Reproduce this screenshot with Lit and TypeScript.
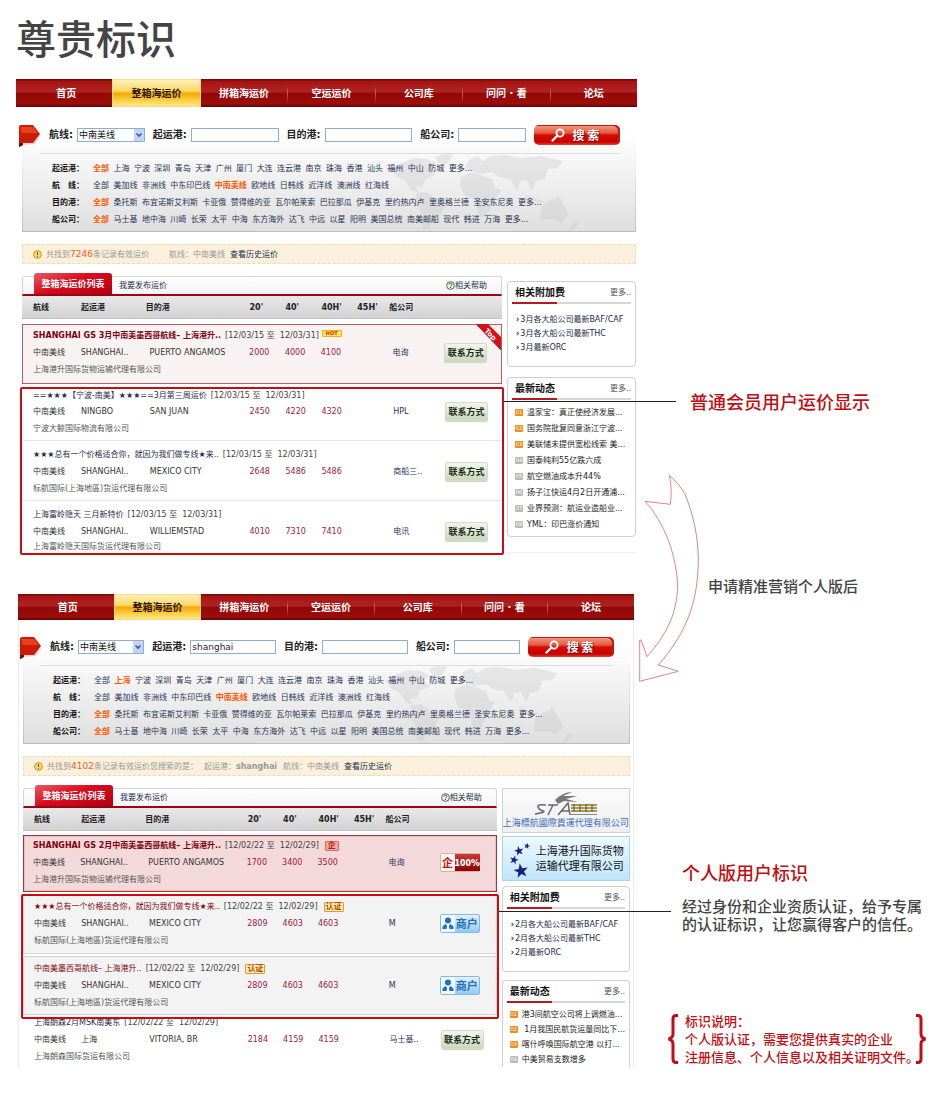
import { LitElement, html, css, svg, nothing } from "lit";
import { customElement, property } from "lit/decorators.js";
import { classMap } from "lit/directives/class-map.js";

type Offer = {
  title: string;
  dates: string;
  badge?: "hot" | "cert" | "firm";
  tone?: "bold" | "red";
  port: string;
  dest: string;
  prices: string[];
  carrier: string;
  company: string;
  action: "contact" | "full" | "merchant";
};

type Group = { kind: "featured" | "marked" | "plain"; offers: Offer[] };

type FilterRow = { label: string; active: string; items: string[] };

type PanelData = {
  id: string;
  compact: boolean;
  query: string;
  filters: FilterRow[];
  count: string;
  after: string;
  origin: string;
  groups: Group[];
  cards: boolean;
  fees: string[];
  news: string[];
};

const words = (s: string) => s.split(" ");

const PORTS = words("全部 上海 宁波 深圳 青岛 天津 广州 厦门 大连 连云港 南京 珠海 香港 汕头 福州 中山 防城 更多...");
const LINES = words("全部 美加线 非洲线 中东印巴线 中南美线 欧地线 日韩线 近洋线 澳洲线 红海线");
const DESTS = words("全部 桑托斯 布宜诺斯艾利斯 卡亚俄 赞得维的亚 瓦尔帕莱索 巴拉那瓜 伊基克 里约热内卢 里奥格兰德 圣安东尼奥 更多...");
const CARRIERS = words("全部 马士基 地中海 川崎 长荣 太平 中海 东方海外 达飞 中远 以星 阳明 美国总统 南美邮船 现代 韩进 万海 更多...");

const filters = (port: string): FilterRow[] => [
  { label: "起运港：", active: port, items: PORTS },
  { label: "航　线：", active: "中南美线", items: LINES },
  { label: "目的港：", active: "全部", items: DESTS },
  { label: "船公司：", active: "全部", items: CARRIERS },
];

const MARCH = "[12/03/15 至  12/03/31]";
const FEB = "[12/02/22 至  12/02/29]";

const BEFORE: PanelData = {
  id: "before",
  compact: false,
  query: "",
  filters: filters("全部"),
  count: "7246",
  after: "条记录有效运价",
  origin: "",
  groups: [
    {
      kind: "featured",
      offers: [
        { title: "SHANGHAI GS 3月中南美墨西哥航线– 上海港升..", dates: MARCH, badge: "hot", tone: "bold", port: "SHANGHAI..", dest: "PUERTO ANGAMOS", prices: ["2000", "4000", "4100", ""], carrier: "电询", company: "上海港升国际货物运输代理有限公司", action: "contact" },
      ],
    },
    {
      kind: "marked",
      offers: [
        { title: "==★★★【宁波-南美】★★★==3月第三周运价", dates: MARCH, port: "NINGBO", dest: "SAN JUAN", prices: ["2450", "4220", "4320", ""], carrier: "HPL", company: "宁波大鲸国际物流有限公司", action: "contact" },
        { title: "★★★总有一个价格适合你，就因为我们做专线★来..", dates: MARCH, port: "SHANGHAI..", dest: "MEXICO CITY", prices: ["2648", "5486", "5486", ""], carrier: "商船三..", company: "标航国际(上海地區)货运代理有限公司", action: "contact" },
        { title: "上海富岭隐天 三月新特价", dates: MARCH, port: "SHANGHAI..", dest: "WILLIEMSTAD", prices: ["4010", "7310", "7410", ""], carrier: "电讯", company: "上海富岭隐天国际货运代理有限公司", action: "contact" },
      ],
    },
  ],
  cards: false,
  fees: ["3月各大船公司最新BAF/CAF", "3月各大船公司最新THC", "3月最新ORC"],
  news: ["温家宝：真正使经济发展...", "国务院批复同意浙江宁波...", "美联储未提供宽松线索 美...", "国泰纯利55亿跌六成", "航空燃油成本升44%", "扬子江快运4月2日开通浦...", "业界预测：航运业造船业...", "YML：印巴涨价通知"],
};

const AFTER: PanelData = {
  id: "after",
  compact: true,
  query: "shanghai",
  filters: filters("上海"),
  count: "4102",
  after: "条记录有效运价您搜索的是：",
  origin: "shanghai",
  groups: [
    {
      kind: "featured",
      offers: [
        { title: "SHANGHAI GS 2月中南美墨西哥航线– 上海港升..", dates: FEB, badge: "firm", tone: "bold", port: "SHANGHAI..", dest: "PUERTO ANGAMOS", prices: ["1700", "3400", "3500", ""], carrier: "电询", company: "上海港升国际货物运输代理有限公司", action: "full" },
      ],
    },
    {
      kind: "marked",
      offers: [
        { title: "★★★总有一个价格适合你，就因为我们做专线★来..", dates: FEB, badge: "cert", tone: "red", port: "SHANGHAI..", dest: "MEXICO CITY", prices: ["2809", "4603", "4603", ""], carrier: "M", company: "标航国际(上海地區)货运代理有限公司", action: "merchant" },
        { title: "中南美墨西哥航线– 上海港升..", dates: FEB, badge: "cert", tone: "red", port: "SHANGHAI..", dest: "MEXICO CITY", prices: ["2809", "4603", "4603", ""], carrier: "M", company: "标航国际(上海地區)货运代理有限公司", action: "merchant" },
      ],
    },
    {
      kind: "plain",
      offers: [
        { title: "上海朗森2月MSK南美东", dates: FEB, port: "上海", dest: "VITORIA, BR", prices: ["2184", "4159", "4159", ""], carrier: "马士基..", company: "上海朗森国际货运有限公司", action: "contact" },
      ],
    },
  ],
  cards: true,
  fees: ["2月各大船公司最新BAF/CAF", "2月各大船公司最新THC", "2月最新ORC"],
  news: ["港3间航空公司将上调燃油...", " 1月我国民航货运量同比下...", "喀什呼唤国际航空港 以打...", "中美贸易支数增多"],
};

const NAV = ["首页", "整箱海运价", "拼箱海运价", "空运运价", "公司库", "问问 · 看", "论坛"];
const STAR = "0,-10 2.4,-3.2 9.5,-3.1 3.8,1.2 5.9,8.1 0,4 -5.9,8.1 -3.8,1.2 -9.5,-3.1 -2.4,-3.2";

@customElement("freight-panel")
export class FreightPanel extends LitElement {
  @property({ attribute: false }) data!: PanelData;

  static styles = css`
    :host {
      display: block;
      --left: 6px;
      --right: 1px;
      --nav: 28px;
      font: 8px/17px "DejaVu Sans", "Noto Sans CJK SC", sans-serif;
      color: #333;
    }
    * { box-sizing: border-box; }
    a { color: inherit; text-decoration: none; }
    ul { list-style: none; margin: 0; padding: 0; }
    h3 { margin: 0; }
    .panel.compact {
      --left: 4px;
      --right: 3px;
      --nav: 26px;
      margin: 0 3px 0 2px;
      border: solid #ececec;
      border-width: 0 1px;
    }
    .nav {
      display: flex;
      height: var(--nav);
      background: linear-gradient(#6d0505, #a81514 10%, #ad2422 46%, #930807 52%, #9b0d0b 88%, #5e0303);
      font-size: 10px;
      font-weight: 700;
      color: #fff;
    }
    .compact .nav { margin: 0 -1px; }
    .nav a {
      flex: 88 1 0;
      display: flex;
      align-items: center;
      justify-content: center;
      white-space: pre;
    }
    .nav a:first-child { flex-grow: 94; padding-left: 4px; }
    .nav a:nth-child(n + 4) {
      border-left: 1px solid;
      border-image: linear-gradient(transparent 25%, #c9605c 50%, transparent 85%) 1;
    }
    .nav .on {
      color: #2c1603;
      border: 1px solid #f8dc85;
      background: linear-gradient(#fdf0b8, #fbd768 42%, #f3ab04 52%, #fcd24c 80%, #ffe68a);
    }
    .finder {
      position: relative;
      margin: 13px var(--right) 0 var(--left);
      padding-bottom: 3px;
      border: solid #bcbcbc;
      border-width: 0 1px 1px;
      border-image: linear-gradient(#fff 20%, #bdbdbd) 1;
      background: linear-gradient(#fff 12%, #f3f3f3 45%, #dfdfdf);
    }
    .compact .finder { margin-top: 12px; }
    .map {
      position: absolute;
      right: 40px;
      bottom: 0;
      width: 210px;
      height: 80px;
      fill: #c8c8c8;
      opacity: 0.35;
    }
    .flag {
      position: absolute;
      left: -5px;
      top: 4px;
      width: 24px;
      height: 24px;
    }
    .search {
      display: flex;
      align-items: center;
      gap: 8px;
      height: 29px;
      padding: 0 15px 0 26px;
    }
    .field {
      flex: 126 1 0;
      display: flex;
      align-items: center;
      gap: 4px;
      min-width: 0;
      font-size: 10px;
      font-weight: 700;
      color: #222;
      white-space: nowrap;
    }
    .field.pick { flex-grow: 96; }
    .field.short { flex-grow: 106; }
    .field input,
    .field select {
      flex: 1;
      width: 100%;
      min-width: 0;
      height: 14px;
      margin: 0;
      padding: 0 1px;
      border: 1px solid #8fafc9;
      border-radius: 0;
      background: #fff;
      appearance: none;
      font: 9px/12px "DejaVu Sans", "Noto Sans CJK SC", sans-serif;
      color: #2c2140;
    }
    .drop { position: relative; flex: 1; display: flex; }
    .field select { font-size: 9px; color: #111; }
    .drop svg {
      position: absolute;
      right: 1px;
      top: 1px;
      width: 10px;
      height: 12px;
      pointer-events: none;
    }
    .go {
      flex: 0 0 86px;
      display: flex;
      align-items: center;
      justify-content: center;
      gap: 8px;
      height: 20px;
      padding: 0 4px 0 0;
      border: 0;
      border-radius: 5px;
      background: linear-gradient(#f0a088, #e4583f 40%, #d50d05 50%, #c90000 85%, #e04a28);
      box-shadow: inset -2px 1px 0 #c41a10;
      color: #fff;
      font: 700 12px/20px "Noto Sans CJK SC", sans-serif;
      text-shadow: 1px 1px 1px #7c0000;
      white-space: pre;
    }
    .go svg { width: 14px; height: 14px; }
    .filters {
      position: relative;
      margin: 4px 16px 0 17px;
      padding: 6px 0 0 12px;
      border-top: 1px solid #dcdcdc;
    }
    .filter { display: flex; height: 17px; white-space: nowrap; }
    .filter b { width: 41px; flex: none; color: #111; }
    .filter p { margin: 0; font-size: 14px; line-height: 17px; }
    .filter a { font-size: 8px; vertical-align: top; color: #253355; }
    .filter a.on { font-weight: 700; color: #ff5a00; }
    .notice {
      display: flex;
      align-items: center;
      margin: 12px var(--right) 0 var(--left);
      height: 20px;
      padding-left: 10px;
      border: 1px dashed #efdcb4;
      background: #fbf0db;
      color: #999;
      white-space: pre;
    }
    .notice svg { width: 9px; height: 9px; margin-right: 4px; }
    .notice em { font-style: normal; font-size: 9px; color: #ff5a20; }
    .notice span { margin-left: 20px; }
    .compact .notice span { margin-left: 6px; }
    .notice a { margin-left: 5px; color: #222d4c; }
    .body {
      display: flex;
      gap: 5px;
      margin: 9px var(--right) 0 var(--left);
    }
    .main { flex: 1; min-width: 0; }
    .tabs { display: flex; align-items: flex-end; height: 23px; padding-top: 3px; }
    .strip {
      flex: 1;
      display: flex;
      align-items: flex-end;
      height: 20px;
      padding: 0 14px 0 11px;
      border: 1px solid #d5d5d5;
      border-bottom: 2px solid #9c0510;
      border-radius: 3px 3px 0 0;
      background: linear-gradient(#fff, #f3f3f3);
      color: #222d4c;
    }
    .strip .cur {
      width: 78px;
      height: 21px;
      border-radius: 3px 3px 0 0;
      background: linear-gradient(160deg, #e85a60, #d90b1e 45%, #b40010);
      color: #fff;
      font-size: 9px;
      font-weight: 700;
      line-height: 22px;
      text-align: center;
    }
    .strip .post { margin-left: 7px; }
    .strip .help { margin-left: auto; display: flex; align-items: center; }
    .help svg { width: 9px; height: 9px; }
    table { display: block; }
    thead, tbody { display: block; }
    tr {
      display: grid;
      grid-template-columns: 48fr 65fr 104fr 36fr 36fr 36fr 32fr 56fr 57fr;
      padding-left: 11px;
    }
    th, td { padding: 0; text-align: left; white-space: pre; }
    thead tr {
      height: 23px;
      align-items: center;
      border-bottom: 1px solid #c4c4c4;
      background: linear-gradient(#e9e9e9, #d2d2d2);
      color: #222;
    }
    tbody tr {
      position: relative;
      grid-template-rows: 17px 17px 17px;
      padding-top: 5px;
      padding-bottom: 3px;
      border-bottom: 1px solid #e6e6e6;
    }
    .title { grid-column: 1 / -1; display: flex; align-items: center; gap: 4px; color: #444; }
    .title a { color: #1f2b50; }
    .title.red a { color: #7f0a0a; }
    .title.bold a { color: #7f0010; font-weight: 700; }
    .indent { padding-left: 4px; }
    .price { color: #a0203f; }
    .carrier { color: #27335c; }
    .company { grid-row: 3; grid-column: 1 / -1; color: #555; }
    .act { margin: -2px 0; display: flex; align-items: center; }
    .featured { margin-top: 5px; }
    .featured tr {
      border: 1px solid #bc5c68;
      padding: 2px 0 5px 10px;
      background: #f8f3f2;
    }
    .compact .featured { margin-top: 4px; }
    .compact .featured tr {
      padding: 1px 0 3px 9px;
      border-color: #a5333c;
      box-shadow: inset 0 0 0 1px #eabfbf;
      background: #f3d9d9;
    }
    .marked {
      position: relative;
      z-index: 1;
      margin: 3px -2px 0;
      border: 2px solid #cb0a12;
      border-radius: 2px;
    }
    .marked tr:first-child { padding-top: 0; grid-template-rows: 14px 17px 17px; }
    .marked tr:last-child { padding-bottom: 0; border: 0; grid-template-rows: 17px 17px 13px; }
    .marked tr:last-child .company { line-height: 13px; }
    .marked tr:first-child .title { line-height: 14px; }
    .compact .marked { margin-top: 2px; padding-bottom: 2px; }
    .compact .marked tr {
      grid-template-rows: 17px 17px 17px;
      padding: 2px 0 4px 10px;
      border: solid #d2d2d2;
      border-width: 0 1px 1px;
      background: #f3f3f3;
    }
    .compact .marked tr:last-child { margin-top: 2px; padding: 3px 0 3px 10px; border-top-width: 1px; }
    .compact .marked tr:last-child .company { line-height: 17px; }
    .plain tr { margin-top: -5px; padding: 0 0 3px 11px; border: 0; }
    .corner { position: absolute; right: 0; top: -1px; width: 25px; height: 26px; }
    .contact {
      width: 43px;
      height: 19px;
      padding: 0;
      border: 1px solid #cfdcc6;
      border-radius: 2px;
      background: linear-gradient(#f2f6ef, #c9d9bd);
      color: #1d2a17;
      font: 700 9px/16px "Noto Sans CJK SC", sans-serif;
      box-shadow: 0 1px 1px #ccd4c6;
    }
    .full, .merchant {
      display: flex;
      align-items: center;
      width: 40px;
      height: 19px;
      padding: 0;
      border: 1px solid #d8b3a0;
      border-radius: 2px;
      font: 700 11px/17px "Noto Sans CJK SC", sans-serif;
    }
    .full i, .full b { flex: 1; font-style: normal; text-align: center; }
    .full i { flex: 0 0 14px; background: #fff4ee; color: #c01818; }
    .full b { background: linear-gradient(#cc3a35, #8a0505); color: #fff; font-size: 9px; }
    .merchant {
      border-color: #86b9e2;
      background: linear-gradient(#dff2ff, #8fcbfa);
      color: #2b6fb6;
      gap: 1px;
    }
    .merchant svg { width: 14px; height: 17px; background: #eef8ff; }
    .badge {
      display: inline-block;
      height: 10px;
      padding: 0 1px;
      border: 1px solid #e39a2a;
      border-radius: 1px;
      background: #ffefb4;
      color: #b04a00;
      font-weight: 700;
      line-height: 8px;
      margin-left: 2px;
    }
    .badge.firm { border-color: #d86a60; background: #f7a79b; color: #b8201a; padding: 0 2px; }
    .badge.hot {
      height: 7px;
      margin: -5px 0 0 -1px;
      padding: 0 3px;
      border-color: #f5b400;
      background: #ffe36a;
      color: #d42a00;
      font-size: 5px;
      line-height: 5px;
    }
    aside {
      flex: 0 0 129px;
      display: flex;
      flex-direction: column;
      gap: 10px;
      padding-top: 8px;
      border-bottom: 1px solid #f0f0f0;
      margin-bottom: 2px;
    }
    .compact aside { flex-basis: 128px; gap: 8px; padding-top: 3px; border: 0; margin: 0; }
    .cards { display: grid; gap: 3px; margin-bottom: -3px; }
    .card {
      height: 45px;
      border: 1px solid #cfcfd4;
      background: linear-gradient(#fbfbfb, #efeff1);
      text-align: center;
      white-space: nowrap;
    }
    .card svg { display: block; margin: 2px auto 0; width: 64px; height: 25px; }
    .card span { display: block; color: #3a6cc0; font-size: 9px; line-height: 13px; margin-top: 1px; }
    .card.blue {
      display: flex;
      align-items: center;
      gap: 4px;
      padding-left: 6px;
      border-color: #a9d4ec;
      background: linear-gradient(#eef9ff, #bfe5fa);
    }
    .card.blue svg { width: 23px; height: 38px; margin: 0; fill: #1a1f86; }
    .card.blue span { margin: 0; color: #111; font-size: 11px; line-height: 15px; text-align: left; }
    .box {
      padding: 0 4px 4px;
      border: 1px solid #cfcfcf;
      border-radius: 4px;
      background: #fff;
    }
    .box.cut { border-bottom: 0; border-radius: 4px 4px 0 0; padding-bottom: 0; }
    .box header {
      display: flex;
      justify-content: space-between;
      align-items: center;
      height: 22px;
      padding: 0 0 0 3px;
      border-bottom: 2px solid;
      border-image: linear-gradient(90deg, #b51a20 38%, #d6d6d6 38%) 1;
      color: #555;
    }
    .box h3 { font-size: 10px; color: #111; }
    .fees { padding: 9px 0 7px 4px; line-height: 14px; color: #1e2a4c; white-space: nowrap; }
    .fees li::before { content: "›"; font-weight: 700; margin-right: 1px; }
    .news { padding: 4px 0 0 3px; color: #222; }
    .news li { display: flex; align-items: center; gap: 4px; height: 16px; white-space: pre; }
    .cut .news li { height: 15px; }
    .news i {
      flex: none;
      width: 8px;
      height: 7px;
      border-radius: 1px;
      background: #b9b9b9;
      color: #fff;
      font: 5px/7px "DejaVu Sans", sans-serif;
      text-align: center;
    }
    .news li:nth-child(-n + 3) i { background: #f58a1c; }
  `;

  private map() {
    return svg`<svg class="map" viewBox="0 0 210 80" aria-hidden="true">
      <path d="M6 18l10-6 14-5 12 1 8 4-6 6 7 5-10 5-4 8-7-1 4 7-8-3-5-9-8-4z" />
      <path d="M50 6l10-4 8 2-5 8-8 3z" />
      <path d="M32 42l10-1 9 7 10 4-5 11-8 6-4 9h-6l-2-17-6-9z" />
      <path d="M76 26l12-5 10 4 9 3 3 9 6 2-9 15-6 12-7-1-4-17-11-4-4-10z" />
      <path d="M80 17l4-8 8-4 6 5 8-5 14-1 16 3 20-2 22 5-5 7-10 1-3 10-9 2-4 9-5-10-7 1-3 9-7-11-11-2-7-5-12 2z" />
      <path d="M156 56l7-6 7-2 3-4 6 10 5 9-7 9-8-4-14 1z" />
      <path d="M140 44l10 4 9 2-2 2-14-4zM190 70l4 3-8 7h-3z" />
    </svg>`;
  }

  private action(kind: Offer["action"]) {
    if (kind === "contact") return html`<button class="contact" type="button">联系方式</button>`;
    if (kind === "full") return html`<button class="full" type="button"><i>企</i><b>100%</b></button>`;
    return html`<button class="merchant" type="button">
      <svg viewBox="0 0 14 17" aria-hidden="true">
        <circle cx="7" cy="5.5" r="3" fill="#1c6fc4" />
        <path d="M1.5 14v-2.500l3-2.500 2.500 3 2.500-3 3 2.500V14z" fill="#1c6fc4" />
        <path d="M6.300 10h1.400l.8 4h-3z" fill="#fff" />
      </svg>商户</button>`;
  }

  private offer(o: Offer, corner: boolean) {
    return html`<tr>
      <td class="title ${o.tone ?? ""}">
        <a href="#">${o.title}</a><span>${o.dates}</span>${o.badge
          ? html`<span class="badge ${o.badge}">${{ hot: "HOT", cert: "认证", firm: "企" }[o.badge]}</span>`
          : nothing}
      </td>
      <td>中南美线</td>
      <td>${o.port}</td>
      <td class="indent">${o.dest}</td>
      ${o.prices.map((p) => html`<td class="price">${p}</td>`)}
      <td class="carrier indent">${o.carrier}</td>
      <td class="act">${this.action(o.action)}${corner
          ? html`<svg class="corner" viewBox="0 0 25 26" role="img" aria-label="Top">
              <path d="M0 0h12l13 13v13z" fill="#d80f14" />
              <path d="M0 0l25 26" stroke="#8c3038" />
              <text x="15" y="13" transform="rotate(46 15 10)" text-anchor="middle" font-family="DejaVu Sans" font-weight="700" font-size="7" fill="#fff">Top</text>
            </svg>`
          : nothing}</td>
      <td class="company">${o.company}</td>
    </tr>`;
  }

  private cards() {
    return html`<div class="cards">
      <a class="card" href="#">
        <svg viewBox="0 0 64 25" aria-hidden="true">
          <path d="M21 9q8-8 17-8l-9 4h14l-11 3 12 3-14-1-6 3z" fill="#77777c" />
          <path d="M12 14q-9-1-8 2t5 4-8 3M14 14h10M19 14l-5 10M24 24l10-12 2 12M27 20h8" fill="none" stroke="#66666c" stroke-width="1.500" />
          <path d="M37 14h26M37 17h26M37 20h26M40 13v8M46 13v8M52 13v8M58 13v8" stroke="#8a7a2c" stroke-width="1.500" />
          <path d="M36 23.500h27" stroke="#888" />
        </svg>
        <span>上海標航國際貨運代理有限公司</span>
      </a>
      <a class="card blue" href="#">
        <svg viewBox="0 0 23 38" aria-hidden="true">
          <polygon points=${STAR} transform="translate(18 6) scale(.32) rotate(12)" />
          <polygon points=${STAR} transform="translate(10 11) scale(.5) rotate(-12)" />
          <polygon points=${STAR} transform="translate(5 20) scale(.46) rotate(14)" />
          <polygon points=${STAR} transform="translate(12 31) scale(.76) rotate(-10)" />
        </svg>
        <span>上海港升国际货物<br />运输代理有限公司</span>
      </a>
    </div>`;
  }

  render() {
    const d = this.data;
    return html`<section class=${classMap({ panel: true, compact: d.compact })}>
      <nav class="nav">
        ${NAV.map((n, i) => html`<a href="#" class=${classMap({ on: i === 1 })}>${n}</a>`)}
      </nav>
      <form class="finder">
        ${this.map()}
        <svg class="flag" viewBox="0 0 24 24" aria-hidden="true">
          <path d="M3 21L22 12l-5 8z" fill="#bbb" opacity=".6" />
          <path d="M1 3q0-2 2-2h12l7 9-7 9H5v2l-4 2z" fill="#cc1b08" />
          <path d="M2 3h13l5 6H4z" fill="#f04a22" opacity=".8" />
          <path d="M1 19h4v2l-4 2z" fill="#7c0800" />
        </svg>
        <div class="search">
          <div class="field pick">
            <label for="line">航线:</label>
            <span class="drop">
              <select id="line"><option>中南美线</option></select>
              <svg viewBox="0 0 10 12" aria-hidden="true">
                <rect width="10" height="12" fill="#c3d5f7" />
                <path d="M2.500 4.500L5 7l2.500-2.500" fill="none" stroke="#3b5a8c" stroke-width="1.600" />
              </svg>
            </span>
          </div>
          <div class="field"><label for="from">起运港:</label><input id="from" .value=${d.query} /></div>
          <div class="field"><label for="to">目的港:</label><input id="to" /></div>
          <div class="field short"><label for="carrier">船公司:</label><input id="carrier" /></div>
          <button class="go" type="button">
            <svg viewBox="0 0 14 14" aria-hidden="true">
              <circle cx="9" cy="5" r="3.600" fill="none" stroke="#fff" stroke-width="1.800" />
              <path d="M6.500 7.500L1.500 12.500" stroke="#fff" stroke-width="2.400" stroke-linecap="round" />
            </svg>搜 索</button>
        </div>
        <div class="filters">
          ${d.filters.map(
            (f) => html`<div class="filter">
              <b>${f.label}</b>
              <p>${f.items.map((it) => html`<a href="#" class=${classMap({ on: it === f.active })}>${it}</a> `)}</p>
            </div>`,
          )}
        </div>
      </form>
      <div class="notice">
        <svg viewBox="0 0 9 9" aria-hidden="true">
          <circle cx="4.500" cy="4.500" r="3.900" fill="#fbd667" stroke="#c9952c" />
          <path d="M4.500 2v3M4.500 6v1" stroke="#8a5200" />
        </svg>共找到<em>${d.count}</em>${d.after}${d.origin ? html`<span>起运港：<b>${d.origin}</b></span>` : nothing}<span>航线：中南美线</span><a href="#">查看历史运价</a>
      </div>
      <div class="body">
        <div class="main">
          <div class="tabs">
            <div class="strip">
              <a class="cur" href="#">整箱海运价列表</a>
              <a class="post" href="#">我要发布运价</a>
              <a class="help" href="#"><svg viewBox="0 0 9 9" aria-hidden="true">
                  <circle cx="4.500" cy="4.500" r="3.900" fill="#eef6d8" stroke="#4a6a5c" />
                  <path d="M3 3.500q0-1.300 1.500-1.300T6 3.500q0 .8-1.500 1.500M4.500 6v1" fill="none" stroke="#33526a" />
                </svg>相关帮助</a>
            </div>
          </div>
          <table>
            <thead>
              <tr>
                ${["航线", "起运港", "目的港", "20'", "40'", "40H'", "45H'", "船公司", ""].map((h) => html`<th>${h}</th>`)}
              </tr>
            </thead>
            ${d.groups.map(
              (g) => html`<tbody class=${g.kind}>
                ${g.offers.map((o) => this.offer(o, g.kind === "featured" && !d.compact))}
              </tbody>`,
            )}
          </table>
        </div>
        <aside>
          ${d.cards ? this.cards() : nothing}
          <div class="box">
            <header><h3>相关附加费</h3><a href="#">更多..</a></header>
            <ul class="fees">${d.fees.map((f) => html`<li><a href="#">${f}</a></li>`)}</ul>
          </div>
          <div class=${classMap({ box: true, cut: d.compact })}>
            <header><h3>最新动态</h3><a href="#">更多..</a></header>
            <ul class="news">${d.news.map((n, i) => html`<li><i>0${i + 1}</i><a href="#">${n}</a></li>`)}</ul>
          </div>
        </aside>
      </div>
    </section>`;
  }
}

@customElement("app-root")
export class AppRoot extends LitElement {
  static styles = css`
    :host {
      display: block;
      background: #fff;
      color: #444;
      font-family: "Noto Sans CJK SC", sans-serif;
    }
    h1, h2, p { margin: 0; }
    .page { padding: 7px 0 50px 17px; margin-left: -1px; }
    h1 { padding-bottom: 12px; font-size: 40px; line-height: 60px; font-weight: 500; }
    .layout { display: grid; grid-template-columns: minmax(0, 1fr) 311px; align-items: start; }
    .shots { display: grid; gap: 39px; }
    .notes { display: flex; flex-direction: column; font-size: 15px; line-height: 18px; font-weight: 500; white-space: nowrap; }
    h2 { position: relative; font-size: 18px; line-height: 24px; font-weight: 500; color: #c40d12; }
    h2::before {
      content: "";
      position: absolute;
      z-index: 2;
      width: 172px;
      border-top: 1px solid #222;
    }
    .normal { margin: 310px 0 62px; padding-left: 53px; }
    .normal::before { left: -133px; top: 12px; }
    .change { display: flex; align-items: center; gap: 6px; padding-left: 1px; }
    .change svg { width: 64px; height: 208px; }
    .change p { padding-top: 14px; }
    .personal { margin: 177px 0 13px; padding-left: 45px; }
    .personal::before { left: -138px; top: 51px; }
    .text { padding-left: 45px; }
    .legend { display: flex; align-items: center; gap: 6px; margin-top: 79px; padding-left: 30px; font-size: 13px; color: #c40d12; }
    .legend svg { flex: none; width: 12px; height: 50px; }
    .legend svg:last-child { margin-left: -10px; }
  `;

  render() {
    const brace = "M11 1.500H9Q6 1.500 6 5v15q0 4-4.500 5Q6 26 6 30v15q0 3.500 3 3.500h2";
    return html`<main class="page">
      <h1>尊贵标识</h1>
      <div class="layout">
        <div class="shots">
          <freight-panel .data=${BEFORE}></freight-panel>
          <freight-panel .data=${AFTER}></freight-panel>
        </div>
        <div class="notes">
          <h2 class="normal">普通会员用户运价显示</h2>
          <div class="change">
            <svg viewBox="0 0 64 208" aria-hidden="true">
              <path d="M31.300.5C37 5 43 12 47 19C56 42 60 62 60.300 84C60.300 128 48 158 20.300 190L40.300 196.300 1.700 206.300V165h1.300L9 181.700C28 160 39 140 39.700 110C38 80 27 48 7 26.300L32.300 29.300C34 18 33 8 31.300.5Z" fill="none" stroke="#df8585" />
            </svg>
            <p>申请精准营销个人版后</p>
          </div>
          <h2 class="personal">个人版用户标识</h2>
          <p class="text">经过身份和企业资质认证，给予专属<br />的认证标识，让您赢得客户的信任。</p>
          <div class="legend">
            <svg viewBox="0 0 12 50" aria-hidden="true"><path d=${brace} fill="none" stroke="#c40d12" stroke-width="3" /></svg>
            <p>标识说明：<br />个人版认证，需要您提供真实的企业<br />注册信息、个人信息以及相关证明文件。</p>
            <svg viewBox="0 0 12 50" aria-hidden="true"><path d=${brace} transform="matrix(-1 0 0 1 12 0)" fill="none" stroke="#c40d12" stroke-width="3" /></svg>
          </div>
        </div>
      </div>
    </main>`;
  }
}
